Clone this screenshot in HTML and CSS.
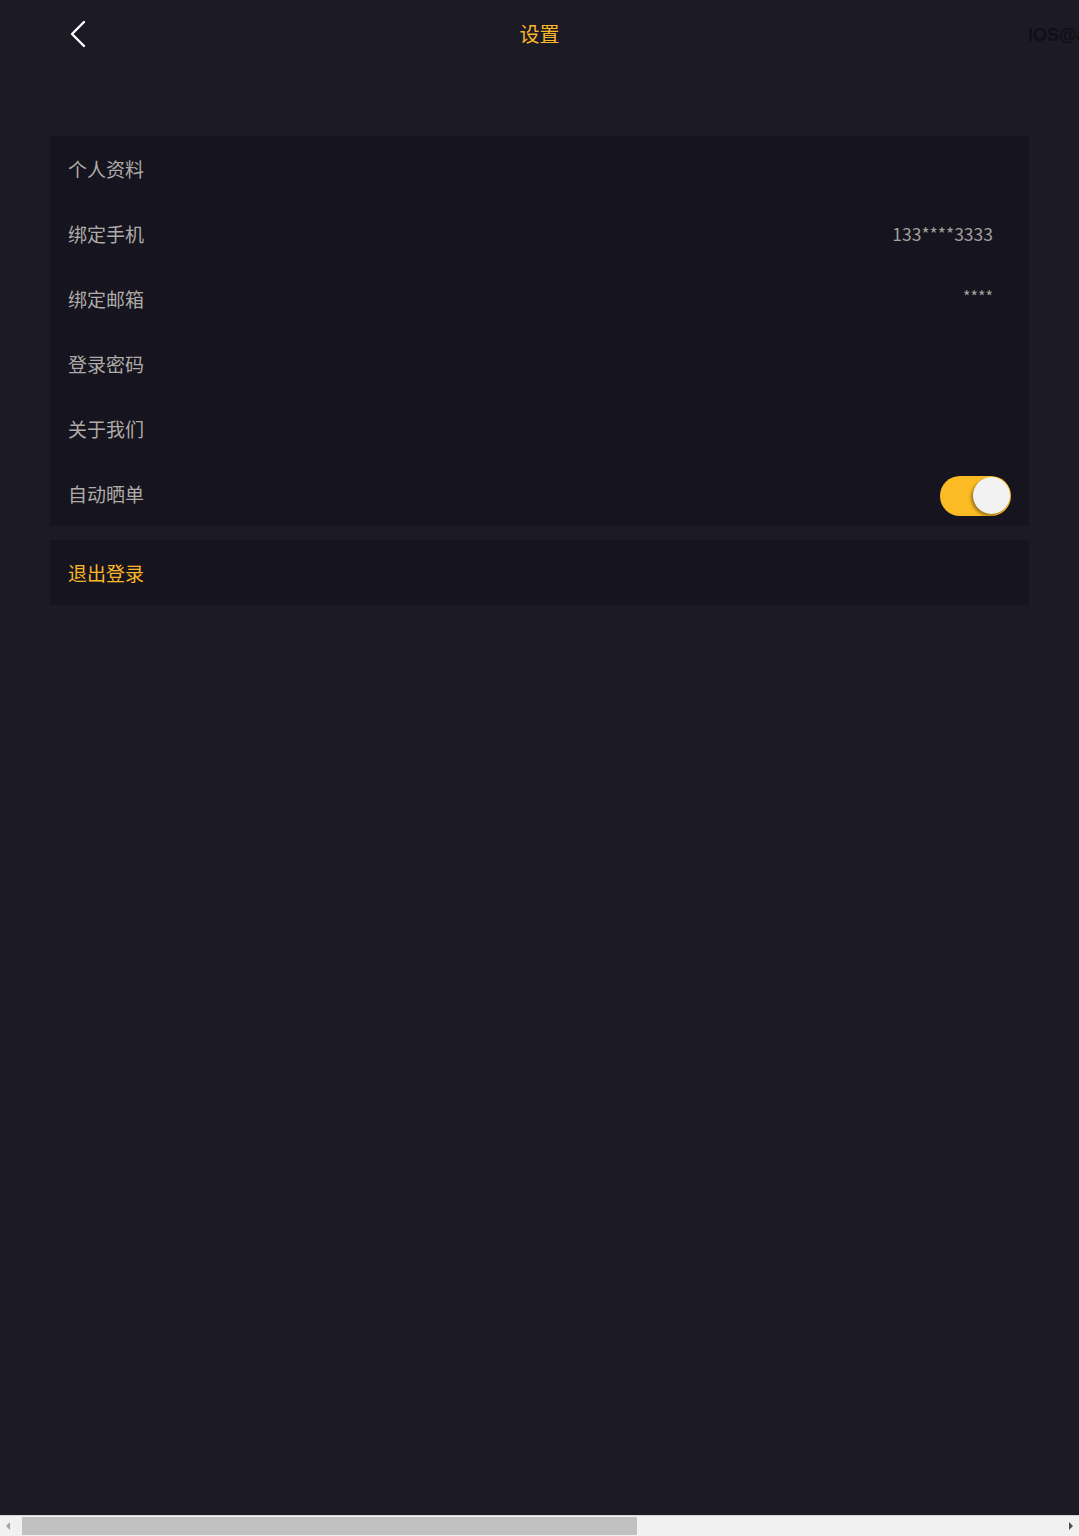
FILE: index.html
```html
<!DOCTYPE html>
<html lang="zh-CN">
<head>
    <meta charset="UTF-8">
    <meta name="viewport" content="width=device-width, initial-scale=1.0">
    <title>设置</title>
    <link rel="stylesheet" href="styles.css">
</head>
<body>
    <header class="top-bar">
        <a class="back" href="#" aria-label="返回">
            <svg width="20" height="28" viewBox="0 0 20 28">
                <path d="M15 2 L3 14 L15 26" fill="none" stroke="#ffffff" stroke-width="2.4" stroke-linecap="round" stroke-linejoin="round"/>
            </svg>
        </a>
        <h1 class="title">设置</h1>
        <span class="tag">IOS@a</span>
    </header>

    <main class="content">
        <ul class="panel">
            <li class="row"><span class="label">个人资料</span></li>
            <li class="row"><span class="label">绑定手机</span><span class="value">133****3333</span></li>
            <li class="row"><span class="label">绑定邮箱</span><span class="value small">****</span></li>
            <li class="row"><span class="label">登录密码</span></li>
            <li class="row"><span class="label">关于我们</span></li>
            <li class="row"><span class="label">自动晒单</span><span class="switch on"><span class="knob"></span></span></li>
        </ul>

        <div class="panel">
            <div class="row"><span class="label logout">退出登录</span></div>
        </div>
    </main>

    <div class="hscroll">
        <span class="arrow left"></span>
        <span class="track"><span class="thumb"></span></span>
        <span class="arrow right"></span>
    </div>
</body>
</html>
```

FILE: styles.css
```css
:root {
    --bg-color: #1c1a25;
    --panel-color: #16141e;
    --text-color: #aeaba8;
    --accent-color: #fbb726;
}

html, body {
    background-color: var(--bg-color);
    overflow: hidden;
}

body {
    margin: 0;
    height: 1536px;
    display: flex;
    flex-direction: column;
    font-family: "Noto Sans CJK SC", "Noto Sans", sans-serif;
    color: var(--text-color);
}

.top-bar {
    position: relative;
    height: 68px;
    flex-shrink: 0;
    display: flex;
    align-items: center;
    justify-content: center;
}

.back {
    position: absolute;
    left: 69px;
    top: 20px;
    display: block;
    width: 20px;
    height: 28px;
}

.title {
    margin: 0;
    font-size: 20px;
    font-weight: 400;
    color: var(--accent-color);
    line-height: 1;
}

.tag {
    position: absolute;
    left: 1028px;
    top: 25px;
    font-family: "Liberation Sans", sans-serif;
    font-size: 18px;
    font-weight: 700;
    color: #100f16;
    white-space: nowrap;
}

.content {
    flex: 1;
    padding: 68px 50px 0;
}

.panel {
    list-style: none;
    margin: 0 0 14px;
    padding: 0;
    background-color: var(--panel-color);
}

.row {
    height: 65px;
    padding: 0 36px 0 18px;
    display: flex;
    align-items: center;
    justify-content: space-between;
}

.label {
    font-size: 19px;
}

.value {
    font-size: 17.5px;
    color: #a3a09e;
}

.value.small {
    font-size: 16px;
    margin-top: -6px;
}

.logout {
    color: var(--accent-color);
}

.switch {
    width: 71px;
    height: 40px;
    margin: 4px -18px 0 0;
    border-radius: 20px;
    background-color: #fbbb24;
    display: flex;
    align-items: center;
    justify-content: flex-end;
    padding: 0 1px;
    box-sizing: border-box;
}

.knob {
    width: 37px;
    height: 37px;
    border-radius: 50%;
    background-color: #f2f2f2;
    box-shadow: -2px 2px 3px rgba(0, 0, 0, 0.35);
}

/* horizontal scrollbar strip at the bottom */
.hscroll {
    height: 21px;
    flex-shrink: 0;
    display: flex;
    align-items: center;
    background-color: #f1f1f1;
    border-top: 1px solid #d6d6d6;
    box-sizing: border-box;
}

.arrow {
    width: 16px;
    height: 20px;
    display: flex;
    align-items: center;
    justify-content: center;
}

.arrow.left::before {
    content: "";
    border-style: solid;
    border-width: 4px 4px 4px 0;
    border-color: transparent #a3a3a3 transparent transparent;
}

.arrow.right::before {
    content: "";
    border-style: solid;
    border-width: 4px 0 4px 4px;
    border-color: transparent transparent transparent #505050;
}

.track {
    flex: 1;
    height: 18px;
    padding-left: 6px;
}

.thumb {
    display: block;
    width: 615px;
    height: 18px;
    background-color: #c1c1c1;
}
```
